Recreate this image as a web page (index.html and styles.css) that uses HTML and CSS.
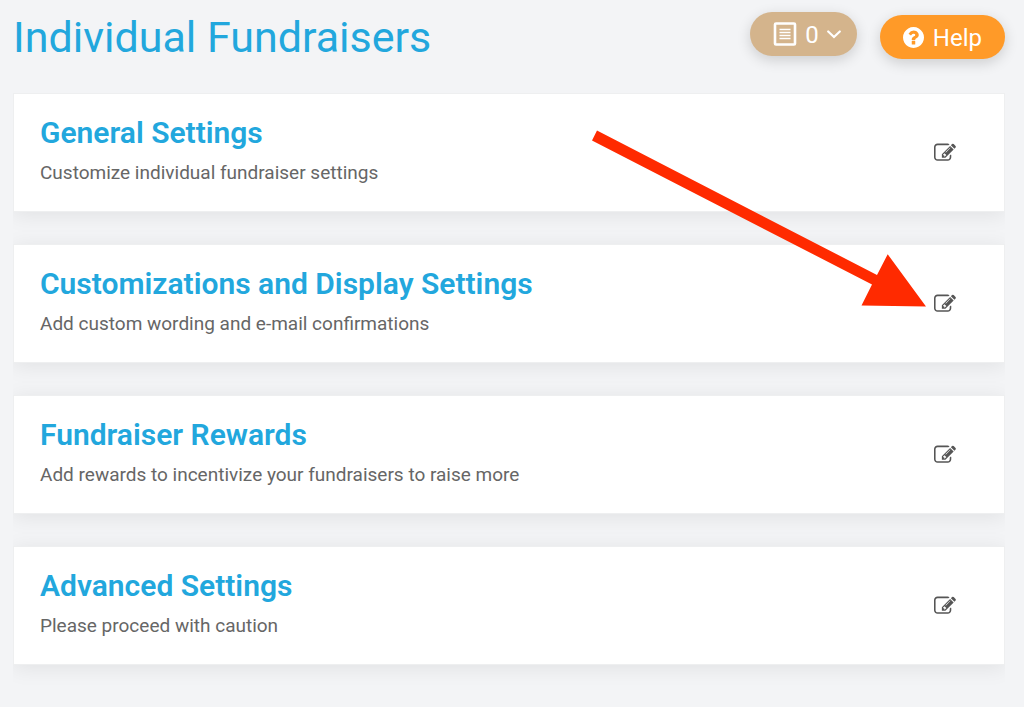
FILE: index.html
```
<!DOCTYPE html>
<html lang="en">
<head>
    <meta charset="UTF-8">
    <meta name="viewport" content="width=device-width, initial-scale=1.0">
    <title>Individual Fundraisers</title>
    <link rel="stylesheet" href="styles.css">
</head>
<body>

    <!-- Shared icons -->
    <svg class="icon-defs" aria-hidden="true">
        <symbol id="icon-edit" viewBox="0 0 1792 1792">
            <path d="M888 1184l116-116-152-152-116 116v56h96v96h56zm440-720q-16-16-33 1l-350 350q-17 17-1 33t33-1l350-350q17-17 1-33zm80 594v190q0 119-84.5 203.5t-203.5 84.5h-832q-119 0-203.5-84.5t-84.5-203.5v-832q0-119 84.5-203.5t203.5-84.5h832q63 0 117 25 15 7 18 23 3 17-9 29l-49 49q-14 14-32 8-23-6-45-6h-832q-66 0-113 47t-47 113v832q0 66 47 113t113 47h832q66 0 113-47t47-113v-126q0-13 9-22l64-64q15-15 35-7t20 29zm-96-738l288 288-672 672h-288v-288zm444 132l-92 92-288-288 92-92q28-28 68-28t68 28l152 152q28 28 28 68t-28 68z"/>
        </symbol>
    </svg>

    <header class="page-header">
        <h1>Individual Fundraisers</h1>
        <div class="actions">
            <button type="button" class="pill pill-list">
                <svg class="icon-list" viewBox="0 0 24 25" aria-hidden="true">
                    <rect x="2" y="1.500" width="20" height="21" rx="1" fill="none" stroke="#fff" stroke-width="2.600"/>
                    <path d="M6.500 7.500h11M6.500 10.500h11M6.500 13.500h11M6.500 16.500h11" stroke="#fff" stroke-width="1.600"/>
                </svg>
                <span>0</span>
                <svg class="icon-chevron" viewBox="0 0 14 10" aria-hidden="true">
                    <path d="M1.200 2.500l5.800 5.500L12.800 2.500" fill="none" stroke="#fff" stroke-width="2.200" stroke-linecap="round"/>
                </svg>
            </button>
            <button type="button" class="pill pill-help">
                <svg class="icon-help" viewBox="128 128 1536 1536" aria-hidden="true">
                    <path d="M1024 1376v-192q0-14-9-23t-23-9h-192q-14 0-23 9t-9 23v192q0 14 9 23t23 9h192q14 0 23-9t9-23zm256-672q0-88-55.5-163t-138.5-116-170-41q-243 0-371 213-15 24 8 42l132 100q7 6 19 6 16 0 25-12 53-68 86-92 34-24 86-24 48 0 85.5 26t37.5 59q0 38-20 61t-68 45q-63 28-115.5 86.5t-52.5 125.5v36q0 14 9 23t23 9h192q14 0 23-9t9-23q0-19 21.5-49.5t54.5-49.5q32-18 49-28.5t46-35 44.5-48 28-60.5 12.5-81zm384 192q0 209-103 385.5t-279.5 279.5-385.5 103-385.5-103-279.5-279.5-103-385.5 103-385.5 279.5-279.5 385.5-103 385.5 103 279.5 279.5 103 385.5z"/>
                </svg>
                <span>Help</span>
            </button>
        </div>
    </header>

    <main class="settings">
        <section class="card">
            <div class="card-text">
                <h2>General Settings</h2>
                <p>Customize individual fundraiser settings</p>
            </div>
            <button type="button" class="edit" aria-label="Edit General Settings">
                <svg><use href="#icon-edit"/></svg>
            </button>
        </section>

        <section class="card">
            <div class="card-text">
                <h2>Customizations and Display Settings</h2>
                <p>Add custom wording and e-mail confirmations</p>
            </div>
            <button type="button" class="edit" aria-label="Edit Customizations and Display Settings">
                <svg><use href="#icon-edit"/></svg>
            </button>
        </section>

        <section class="card">
            <div class="card-text">
                <h2>Fundraiser Rewards</h2>
                <p>Add rewards to incentivize your fundraisers to raise more</p>
            </div>
            <button type="button" class="edit" aria-label="Edit Fundraiser Rewards">
                <svg><use href="#icon-edit"/></svg>
            </button>
        </section>

        <section class="card">
            <div class="card-text">
                <h2>Advanced Settings</h2>
                <p>Please proceed with caution</p>
            </div>
            <button type="button" class="edit" aria-label="Edit Advanced Settings">
                <svg><use href="#icon-edit"/></svg>
            </button>
        </section>

        <!-- Arrow pointing at the second edit button -->
        <svg class="arrow" viewBox="0 0 334 177" aria-hidden="true">
            <path d="M0 10.500L5 .5 285 145l10.700-20.700L334 176.500l-64.500-1L280 154.500z"/>
        </svg>
    </main>

</body>
</html>
```

FILE: styles.css
```
* {
    box-sizing: border-box;
}

body {
    margin: 0;
    padding: 12px 19px 0 13px;
    background-color: #f3f4f6;
    color: #666;
    font-family: Roboto, sans-serif;
}

h1, h2, p {
    margin: 0;
}

button {
    border: 0;
    font-family: inherit;
    cursor: pointer;
}

.icon-defs {
    display: none;
}

/* Header */
.page-header {
    display: flex;
    justify-content: space-between;
    align-items: flex-start;
    margin-bottom: 31px;
}

h1 {
    color: #22a7dd;
    font-size: 43px;
    font-weight: 400;
    line-height: 50px;
}

.actions {
    display: flex;
    align-items: flex-start;
    gap: 23px;
}

.pill {
    display: flex;
    align-items: center;
    height: 44px;
    padding: 0 23px;
    border-radius: 22px;
    color: #fff;
    font-size: 24px;
    box-shadow: 0 4px 14px rgba(0, 0, 0, 0.16);
}

.pill span {
    padding-top: 2px;
}

.pill-list {
    gap: 8px;
    padding-right: 16px;
    background-color: #d4b48c;
}

.pill-help {
    gap: 9px;
    margin-top: 3px;
    background-color: #ff9a28;
}

.icon-list {
    width: 24px;
    height: 25px;
}

.icon-chevron {
    width: 14px;
    height: 10px;
}

.icon-help {
    width: 21px;
    height: 21px;
    fill: #fff;
}

/* Cards */
.settings {
    position: relative;
    display: flex;
    flex-direction: column;
    gap: 32px;
    padding-bottom: 21px;
    overflow: hidden;
}

.card {
    display: flex;
    justify-content: space-between;
    align-items: center;
    padding: 20px 48px 20px 26px;
    background-color: #fff;
    border: 1px solid #eeeff0;
    box-shadow: 0 3px 20px rgba(0, 0, 0, 0.08);
}

.card-text {
    padding-bottom: 5px;
}

h2 {
    margin-bottom: 7px;
    color: #22a7dd;
    font-size: 30px;
    font-weight: 600;
    line-height: 38px;
}

p {
    font-size: 19px;
    line-height: 27px;
}

.edit {
    padding: 0;
    background: none;
}

.edit svg {
    display: block;
    width: 22px;
    height: 22px;
    fill: #555;
}

.arrow {
    position: absolute;
    top: 37px;
    right: 79px;
    width: 334px;
    height: 177px;
    fill: #ff2a00;
    pointer-events: none;
}
```
